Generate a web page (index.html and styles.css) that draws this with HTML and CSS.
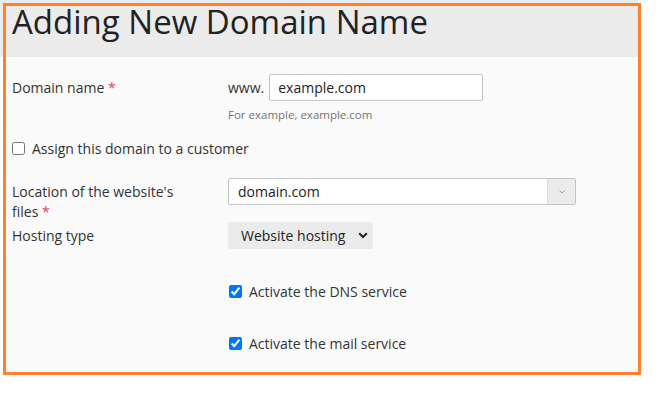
FILE: index.html
```html
<!DOCTYPE html>
<html lang="en">
<head>
    <meta charset="UTF-8">
    <title>Adding New Domain Name</title>
    <link rel="stylesheet" href="styles.css">
</head>
<body>

    <!-- Rahmen um das Formular -->
    <div class="frame">
        <div class="header">
            <h1>Adding New Domain Name</h1>
        </div>

        <div class="form">
            <!-- Domainname -->
            <div class="row row-domain">
                <div class="label">Domain name <span class="required">*</span></div>
                <div class="field">
                    <div class="www">
                        <span class="prefix">www.</span>
                        <div class="text-input">example.com</div>
                    </div>
                    <div class="hint">For example, example.com</div>
                </div>
            </div>

            <label class="check row-assign">
                <input type="checkbox">
                <span>Assign this domain to a customer</span>
            </label>

            <!-- Speicherort -->
            <div class="row row-location">
                <div class="label two-lines">Location of the website's files <span class="required">*</span></div>
                <div class="field">
                    <div class="combo">
                        <span class="combo-value">domain.com</span>
                        <span class="combo-button">
                            <svg width="6" height="4" viewBox="0 0 6 4"><path d="M0.5 0.5 L3 3 L5.5 0.5" fill="none" stroke="#999" stroke-width="1"/></svg>
                        </span>
                    </div>
                </div>
            </div>

            <div class="row row-hosting">
                <div class="label">Hosting type</div>
                <div class="field">
                    <div class="select-btn">
                        <span>Website hosting</span>
                        <svg width="10" height="7" viewBox="0 0 10 7"><path d="M1.2 1.2 L5 5 L8.8 1.2" fill="none" stroke="#222" stroke-width="2"/></svg>
                    </div>
                </div>
            </div>

            <!-- Dienste -->
            <label class="check indent row-dns">
                <input type="checkbox" checked>
                <span>Activate the DNS service</span>
            </label>

            <label class="check indent row-mail">
                <input type="checkbox" checked>
                <span>Activate the mail service</span>
            </label>
        </div>
    </div>

</body>
</html>
```

FILE: styles.css
```css
body {
    margin: 0;
    padding: 3px;
    font-family: "Open Sans", sans-serif;
    color: #333;
    background: linear-gradient(#ebebeb, #ebebeb) no-repeat;
    background-size: 638px 57px;
    background-color: white;
}

/* Orangener Rahmen */
.frame {
    box-sizing: border-box;
    width: 638px;
    height: 372px;
    border: 3px solid #ff8026;
    background-color: #fafafa;
}

.header {
    height: 51px;
    padding-left: 6px;
    background-color: #ebebeb;
}

.header h1 {
    margin: 0;
    font-size: 33px;
    font-weight: normal;
    line-height: 32px;
    color: #222;
}

.form {
    padding: 0 6px;
    font-size: 14px;
    line-height: 19px;
}

.row {
    display: flex;
    align-items: flex-start;
}

.label {
    width: 216px;
    padding-top: 4px;
    padding-right: 40px;
    box-sizing: border-box;
}

.two-lines {
    line-height: 20px;
}

.required {
    color: #e0405e;
}

.row-domain {
    margin-top: 17px;
}

.www {
    display: flex;
    align-items: center;
    gap: 5px;
}

.text-input {
    box-sizing: border-box;
    width: 214px;
    height: 27px;
    padding: 3px 8px;
    background: white;
    border: 1px solid #c4c4c4;
    border-radius: 2px;
    color: #222;
}

.hint {
    margin-top: 6px;
    font-size: 11.5px;
    line-height: 16px;
    color: #737373;
}

/* Checkboxen */
.check {
    display: flex;
    align-items: center;
    gap: 7px;
}

.check input {
    margin: 0;
    width: 13px;
    height: 13px;
}

.row-assign {
    margin-top: 16px;
}

.indent {
    padding-left: 217px;
}

.row-location {
    margin-top: 20px;
}

.combo {
    display: flex;
    box-sizing: border-box;
    width: 348px;
    height: 27px;
    background: white;
    border: 1px solid #c4c4c4;
    border-radius: 2px;
}

.combo-value {
    flex: 1;
    padding: 3px 9px;
    color: #222;
}

.combo-button {
    width: 27px;
    display: flex;
    align-items: center;
    justify-content: center;
    background-color: #ebebeb;
    border-left: 1px solid #dcdcdc;
}

.row-hosting {
    margin-top: 0;
}

.select-btn {
    display: inline-flex;
    align-items: center;
    gap: 13px;
    height: 27px;
    padding: 0 5px 0 13px;
    background-color: #ebebeb;
    border-radius: 2px;
    color: #222;
}

.row-dns {
    margin-top: 33px;
}

.row-mail {
    margin-top: 33px;
}
```
